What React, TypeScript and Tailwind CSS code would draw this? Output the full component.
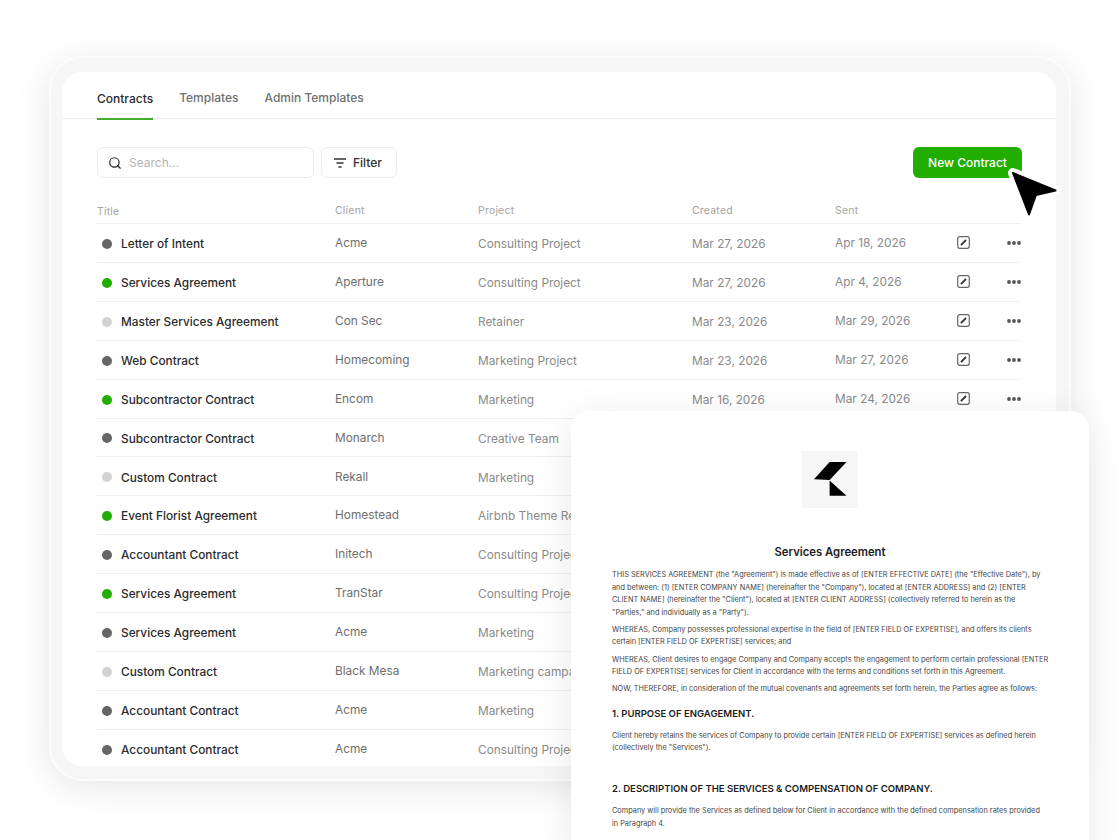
import { Search } from 'lucide-react';

type Row = {
  title: string;
  client: string;
  project: string;
  created?: string;
  sent?: string;
  status: 'dark' | 'green' | 'light';
};

const rows: Row[] = [
  { title: 'Letter of Intent', client: 'Acme', project: 'Consulting Project', created: 'Mar 27, 2026', sent: 'Apr 18, 2026', status: 'dark' },
  { title: 'Services Agreement', client: 'Aperture', project: 'Consulting Project', created: 'Mar 27, 2026', sent: 'Apr 4, 2026', status: 'green' },
  { title: 'Master Services Agreement', client: 'Con Sec', project: 'Retainer', created: 'Mar 23, 2026', sent: 'Mar 29, 2026', status: 'light' },
  { title: 'Web Contract', client: 'Homecoming', project: 'Marketing Project', created: 'Mar 23, 2026', sent: 'Mar 27, 2026', status: 'dark' },
  { title: 'Subcontractor Contract', client: 'Encom', project: 'Marketing', created: 'Mar 16, 2026', sent: 'Mar 24, 2026', status: 'green' },
  { title: 'Subcontractor Contract', client: 'Monarch', project: 'Creative Team', status: 'dark' },
  { title: 'Custom Contract', client: 'Rekall', project: 'Marketing', status: 'light' },
  { title: 'Event Florist Agreement', client: 'Homestead', project: 'Airbnb Theme Re', status: 'green' },
  { title: 'Accountant Contract', client: 'Initech', project: 'Consulting Project', status: 'dark' },
  { title: 'Services Agreement', client: 'TranStar', project: 'Consulting Project', status: 'green' },
  { title: 'Services Agreement', client: 'Acme', project: 'Marketing', status: 'dark' },
  { title: 'Custom Contract', client: 'Black Mesa', project: 'Marketing campaign', status: 'light' },
  { title: 'Accountant Contract', client: 'Acme', project: 'Marketing', status: 'dark' },
  { title: 'Accountant Contract', client: 'Acme', project: 'Consulting Project', status: 'dark' },
];

const dotColor = {
  dark: 'bg-[#666666]',
  green: 'bg-[#22ad01]',
  light: 'bg-[#d2d2d2]',
};

function EditIcon() {
  return (
    <svg className="mt-[-2px]" width="13" height="13" viewBox="0 0 13 13" fill="none">
      <rect x="0.7" y="0.7" width="11.6" height="11.6" rx="2" stroke="#666666" strokeWidth="1.2" />
      <path d="M3.9 9.1 L9 4" stroke="#333333" strokeWidth="1.8" />
    </svg>
  );
}

function MoreIcon() {
  return (
    <svg className="mt-[-2px]" width="14" height="4" viewBox="0 0 14 4" fill="#555555">
      <circle cx="2" cy="2" r="1.9" />
      <circle cx="7" cy="2" r="1.9" />
      <circle cx="12" cy="2" r="1.9" />
    </svg>
  );
}

function ContractRow({ row }: { row: Row }) {
  return (
    <div className="grid h-[38.92px] grid-cols-[238px_143px_214px_143px_122px_50px_14px] items-center border-b border-[#efefef] pt-[2px] text-[11.85px]">
      <div className="flex items-center pl-[5px]">
        <span className={`h-[10px] w-[10px] rounded-full ${dotColor[row.status]}`} />
        <span className="ml-[9px] pt-[2px] font-[470] text-[#2b2b2b]">{row.title}</span>
      </div>
      <span className="text-[#6e6e6e]">{row.client}</span>
      <span className="whitespace-nowrap pt-[2px] text-[#8a8a8a]">{row.project}</span>
      <span className="pt-[2px] text-[#8a8a8a]">{row.created}</span>
      <span className="text-[#8a8a8a]">{row.sent}</span>
      <EditIcon />
      <MoreIcon />
    </div>
  );
}

function DocLine({ children }: { children: string }) {
  return <div className="whitespace-nowrap">{children}</div>;
}

function DocumentCard() {
  return (
    <div className="absolute left-[571px] top-[411px] h-[460px] w-[518px] rounded-[18px] bg-white px-[41px] pt-[40px] shadow-[0_8px_40px_rgba(0,0,0,0.09)]">
      <div className="ml-[190px] flex h-[57px] w-[56px] bg-[#f6f6f6]">
        <svg width="56" height="57" viewBox="0 0 56 57" fill="#000000">
          <path d="M27.6 11 H44.5 L27.6 29 L12 28.2 Z" />
          <path d="M27.6 29.5 L44.5 44.8 H27.6 Z" />
        </svg>
      </div>
      <div className="mt-[37px] text-center text-[11.3px] font-semibold leading-[14px] text-[#1c1c1c]">Services Agreement</div>
      <div className="mt-[10px] text-[7.35px] leading-[12.6px] text-[#444444]">
        <DocLine>THIS SERVICES AGREEMENT (the "Agreement") is made effective as of [ENTER EFFECTIVE DATE] (the "Effective Date"), by</DocLine>
        <DocLine>and between: (1) [ENTER COMPANY NAME] (hereinafter the "Company"), located at [ENTER ADDRESS] and (2) [ENTER</DocLine>
        <DocLine>CLIENT NAME] (hereinafter the "Client"), located at [ENTER CLIENT ADDRESS] (collectively referred to herein as the</DocLine>
        <DocLine>"Parties," and individually as a "Party").</DocLine>
        <div className="mt-[4.5px]">
          <DocLine>WHEREAS, Company possesses professional expertise in the field of [ENTER FIELD OF EXPERTISE], and offers its clients</DocLine>
          <DocLine>certain [ENTER FIELD OF EXPERTISE] services; and</DocLine>
        </div>
        <div className="mt-[4.5px]">
          <DocLine>WHEREAS, Client desires to engage Company and Company accepts the engagement to perform certain professional [ENTER</DocLine>
          <DocLine>FIELD OF EXPERTISE] services for Client in accordance with the terms and conditions set forth in this Agreement.</DocLine>
        </div>
        <div className="mt-[4.5px]">
          <DocLine>NOW, THEREFORE, in consideration of the mutual covenants and agreements set forth herein, the Parties agree as follows:</DocLine>
        </div>
        <div className="mt-[11px] text-[9.55px] font-semibold leading-[14px] text-[#1c1c1c]">1. PURPOSE OF ENGAGEMENT.</div>
        <div className="mt-[9px]">
          <DocLine>Client hereby retains the services of Company to provide certain [ENTER FIELD OF EXPERTISE] services as defined herein</DocLine>
          <DocLine>(collectively the "Services").</DocLine>
        </div>
        <div className="mt-[27px] text-[9.55px] font-semibold leading-[14px] text-[#1c1c1c]">2. DESCRIPTION OF THE SERVICES &amp; COMPENSATION OF COMPANY.</div>
        <div className="mt-[9px]">
          <DocLine>Company will provide the Services as defined below for Client in accordance with the defined compensation rates provided</DocLine>
          <DocLine>in Paragraph 4.</DocLine>
        </div>
      </div>
    </div>
  );
}

export default function App() {
  return (
    <div className="relative h-[840px] w-[1120px] overflow-hidden bg-white font-['Inter',sans-serif]">
      <div className="pl-[49px] pt-[56px]">
        {/* Outer frame */}
        <div className="h-[725px] w-[1022px] rounded-[34px] border-2 border-[#fcfcfc] bg-[#f6f6f6] pb-[13px] pl-[11px] pr-[13px] pt-[14px] shadow-[0_6px_36px_rgba(0,0,0,0.10)]">
          <div className="h-full overflow-hidden rounded-[20px] bg-white">
            {/* Tabs */}
            <div className="flex h-[47px] gap-[26px] border-b border-[#ececec] pl-[35px] text-[12px] font-[470]">
              <div className="relative flex h-[47px] items-center pt-[6px] text-[#2b2b2b]">
                Contracts
                <span className="absolute bottom-[-1px] left-0 right-0 h-[2px] bg-[#3fae2a]" />
              </div>
              <div className="flex items-center pt-[6px] text-[#6f6f6f]">Templates</div>
              <div className="flex items-center pt-[6px] text-[#6f6f6f]">Admin Templates</div>
            </div>

            <div className="pl-[35px] pr-[35px]">
              {/* Toolbar */}
              <div className="mt-[28px] flex h-[31px] items-center">
                <div className="flex h-[31px] w-[217px] items-center rounded-[6px] border border-[#ececec] pl-[10px]">
                  <Search size={14} strokeWidth={2} className="text-[#222222]" />
                  <span className="ml-[7px] text-[12px] text-[#b4b4b4]">Search...</span>
                </div>
                <div className="ml-[7px] flex h-[31px] w-[76px] items-center rounded-[6px] border border-[#ececec] pl-[11px]">
                  <svg width="14" height="12" viewBox="0 0 14 12" fill="none" stroke="#333333" strokeWidth="1.3">
                    <path d="M1 2 H13 M3.5 6 H10.5 M5.5 10 H8.5" />
                  </svg>
                  <span className="ml-[6px] text-[12px] font-[470] text-[#333333]">Filter</span>
                </div>
                <div className="ml-auto mr-[-1px] flex h-[31px] w-[109px] items-center justify-center rounded-[6px] bg-[#22ad01] text-[12px] font-[470] text-white">
                  New Contract
                </div>
              </div>

              {/* Table header */}
              <div className="mt-[24px] grid h-[22px] grid-cols-[238px_143px_214px_143px_186px] border-b border-[#efefef] pt-[3px] text-[10.5px] leading-[12px] tracking-[0.2px] text-[#a3a3a3]">
                <span className="pt-[1px]">Title</span>
                <span>Client</span>
                <span>Project</span>
                <span>Created</span>
                <span>Sent</span>
              </div>

              {rows.map((row, i) => (
                <ContractRow key={i} row={row} />
              ))}
            </div>
          </div>
        </div>
      </div>

      {/* Cursor */}
      <svg className="absolute left-[1002px] top-[162px]" width="64" height="64" viewBox="0 0 64 64" fill="none">
        <path d="M11 11 L53.5 28.5 L34 33 L27 52.5 Z" fill="#000000" stroke="#ffffff" strokeWidth="10" strokeLinejoin="round" />
        <path d="M11 11 L53.5 28.5 L34 33 L27 52.5 Z" fill="#000000" stroke="#000000" strokeWidth="2" strokeLinejoin="round" />
      </svg>

      <DocumentCard />
    </div>
  );
}
